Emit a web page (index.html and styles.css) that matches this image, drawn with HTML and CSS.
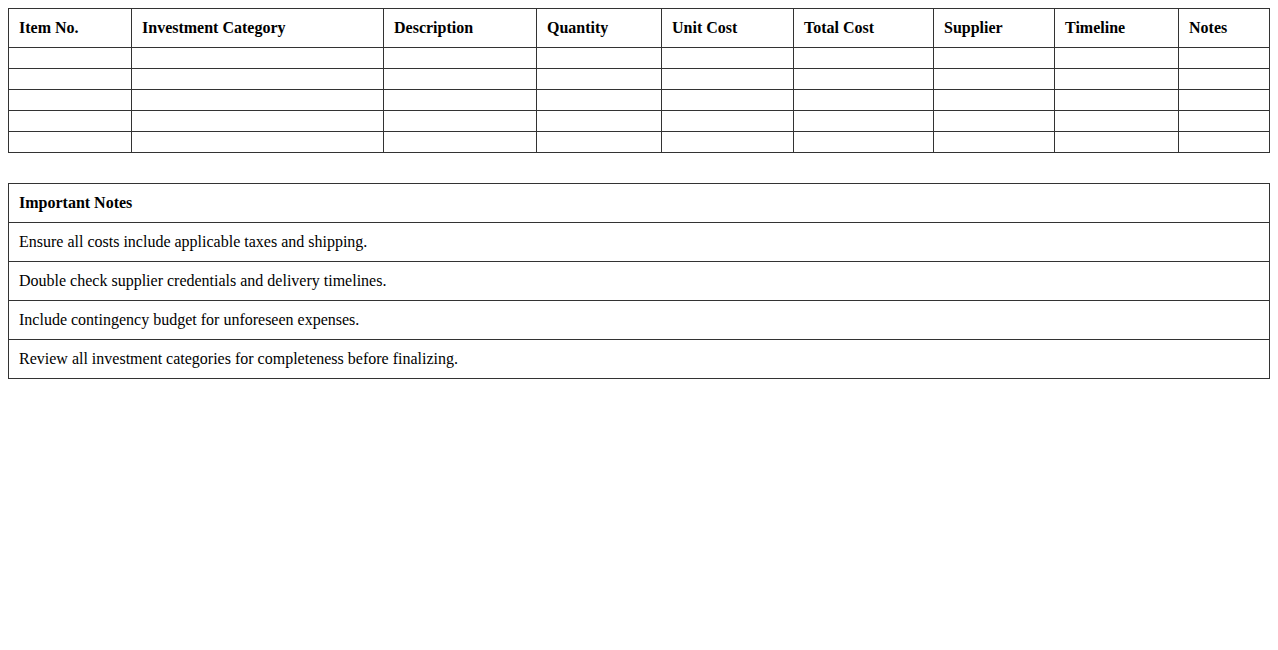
FILE: index.html
```html
<!DOCTYPE html>
<html>
<head>
<meta charset="utf-8">
<link rel="stylesheet" href="styles.css">
</head>
<body>
<table class="grid">
  <colgroup>
    <col class="c1"><col class="c2"><col class="c3"><col class="c4"><col class="c5"><col class="c6"><col class="c7"><col class="c8"><col class="c9">
  </colgroup>
  <thead>
    <tr><th>Item No.</th><th>Investment Category</th><th>Description</th><th>Quantity</th><th>Unit Cost</th><th>Total Cost</th><th>Supplier</th><th>Timeline</th><th>Notes</th></tr>
  </thead>
  <tbody>
    <tr><td></td><td></td><td></td><td></td><td></td><td></td><td></td><td></td><td></td></tr>
    <tr><td></td><td></td><td></td><td></td><td></td><td></td><td></td><td></td><td></td></tr>
    <tr><td></td><td></td><td></td><td></td><td></td><td></td><td></td><td></td><td></td></tr>
    <tr><td></td><td></td><td></td><td></td><td></td><td></td><td></td><td></td><td></td></tr>
    <tr><td></td><td></td><td></td><td></td><td></td><td></td><td></td><td></td><td></td></tr>
  </tbody>
</table>
<table class="notes">
  <thead><tr><th>Important Notes</th></tr></thead>
  <tbody>
    <tr><td>Ensure all costs include applicable taxes and shipping.</td></tr>
    <tr><td>Double check supplier credentials and delivery timelines.</td></tr>
    <tr><td>Include contingency budget for unforeseen expenses.</td></tr>
    <tr><td>Review all investment categories for completeness before finalizing.</td></tr>
  </tbody>
</table>
</body>
</html>
```
FILE: styles.css
```css
body {
  margin: 8px;
  font-family: "Liberation Serif", "Times New Roman", serif;
  font-size: 16px;
  color: #000;
  background: #fff;
}
table {
  width: 100%;
  border-collapse: collapse;
}
.grid {
  table-layout: fixed;
  margin-bottom: 30px;
}
th, td {
  border: 1px solid #333;
  padding: 10px;
  text-align: left;
  line-height: 18px;
}
td:empty {
  line-height: 0;
}
.c1 { width: 123px; }
.c2 { width: 252px; }
.c3 { width: 153px; }
.c4 { width: 125px; }
.c5 { width: 132px; }
.c6 { width: 140px; }
.c7 { width: 121px; }
.c8 { width: 124px; }
.c9 { width: 91px; }
```
